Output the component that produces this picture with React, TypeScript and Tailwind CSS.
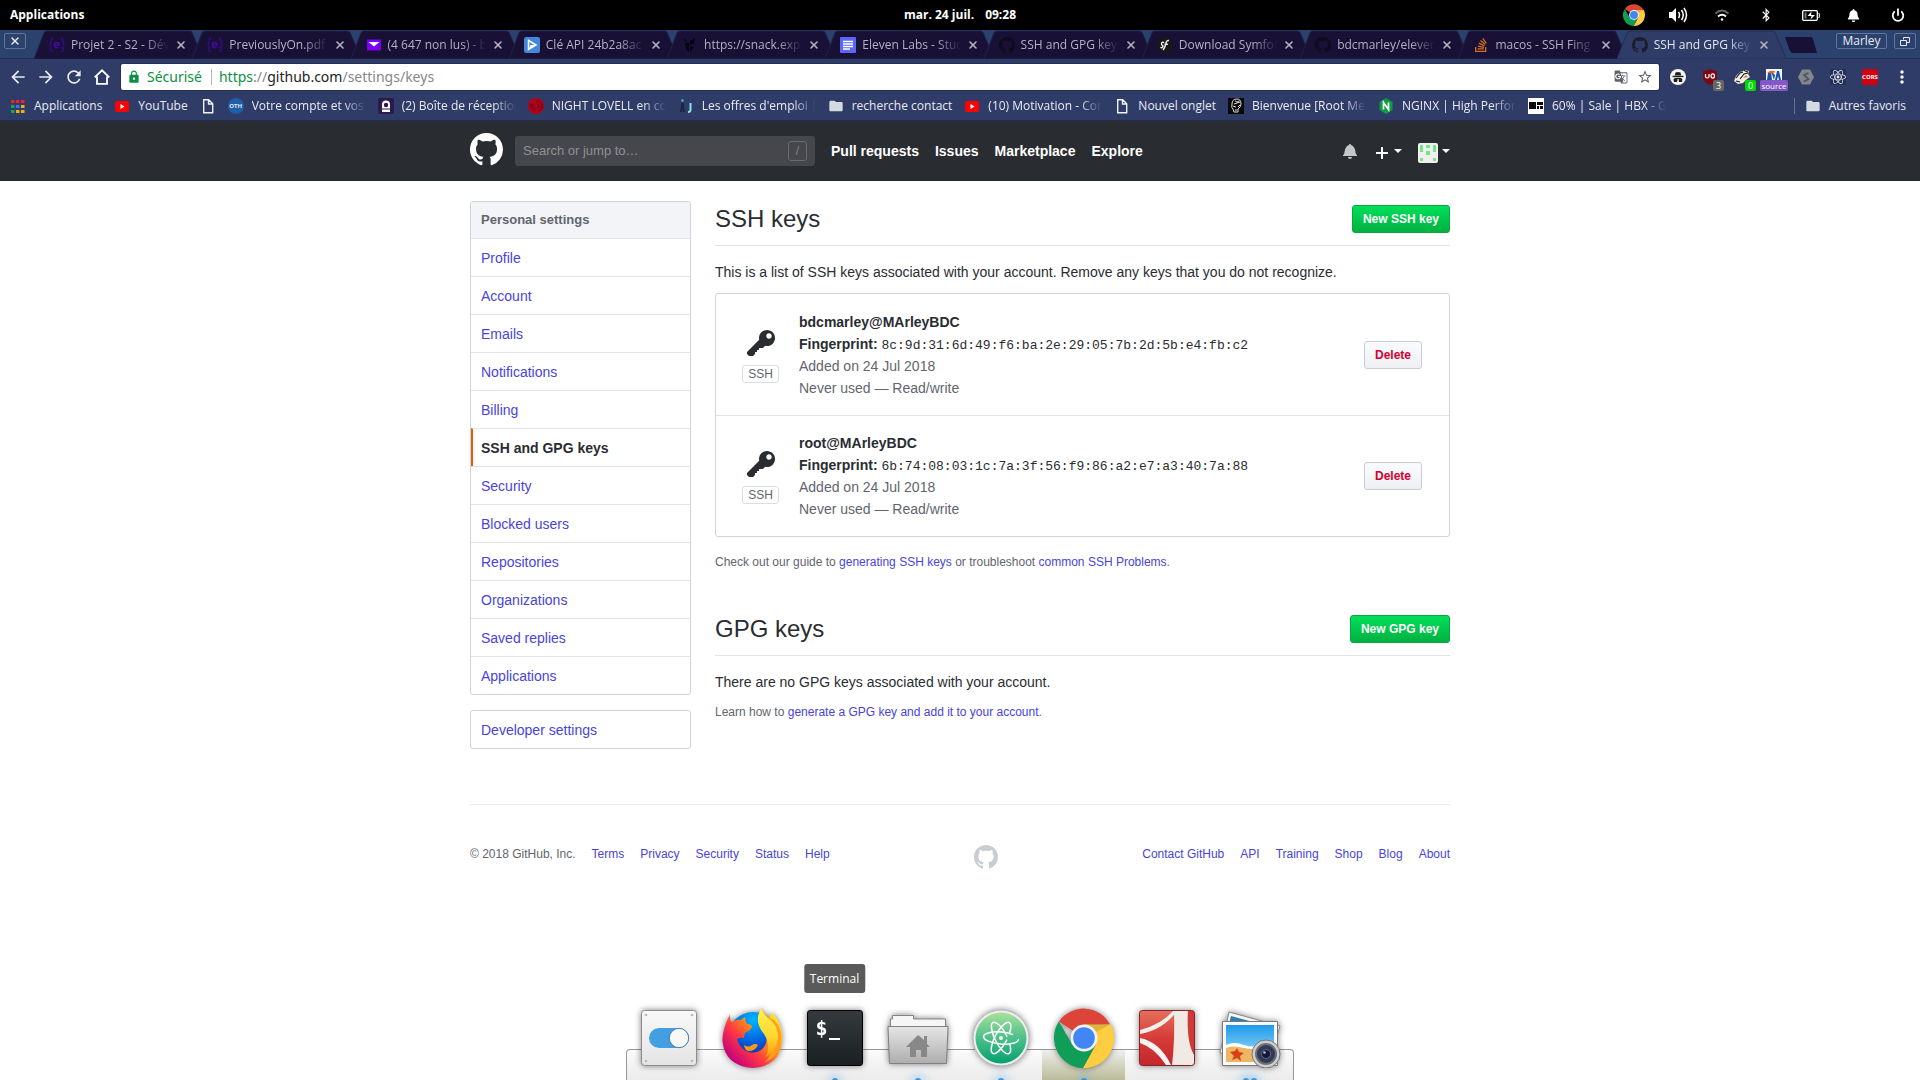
import type { ReactNode } from "react";
import { FaBell, FaBluetoothB, FaReact, FaStackOverflow } from "react-icons/fa";
import { MdArrowBack, MdArrowForward, MdFolder, MdGTranslate, MdLock, MdMoreVert, MdRefresh, MdStarBorder } from "react-icons/md";
import { Power, X } from "lucide-react";

const OCTOCAT =
  "M8 0C3.58 0 0 3.58 0 8c0 3.54 2.29 6.53 5.47 7.59.4.07.55-.17.55-.38 0-.19-.01-.82-.01-1.49-2.01.37-2.53-.49-2.69-.94-.09-.23-.48-.94-.82-1.13-.28-.15-.68-.52-.01-.53.63-.01 1.08.58 1.23.82.72 1.21 1.87.87 2.33.66.07-.52.28-.87.51-1.07-1.78-.2-3.64-.89-3.64-3.95 0-.87.31-1.59.82-2.15-.08-.2-.36-1.02.08-2.12 0 0 .67-.21 2.2.82.64-.18 1.32-.27 2-.27.68 0 1.36.09 2 .27 1.53-1.04 2.2-.82 2.2-.82.44 1.1.16 1.92.08 2.12.51.56.82 1.27.82 2.15 0 3.07-1.87 3.75-3.65 3.95.29.25.54.73.54 1.48 0 1.07-.01 1.93-.01 2.2 0 .21.15.46.55.38A8.013 8.013 0 0 0 16 8c0-4.42-3.58-8-8-8z";
const KEY =
  "M12.83 2.17C12.08 1.42 11.14 1.03 10 1c-1.13.03-2.08.42-2.83 1.17S6.04 3.86 6.01 5c0 .3.03.59.09.89L0 12v1l1 1h2l1-1v-1h1v-1h1v-1h2l1.09-1.11c.3.08.59.11.91.11 1.14-.03 2.08-.42 2.83-1.17S13.97 6.14 14 5c-.03-1.14-.42-2.08-1.17-2.83zM11 5.38c-.77 0-1.38-.61-1.38-1.38 0-.77.61-1.38 1.38-1.38.77 0 1.38.61 1.38 1.38 0 .77-.61 1.38-1.38 1.38z";
const BELL =
  "M13.99 11.991v1H0v-1l.73-.58c.769-.769.809-2.547 1.189-4.416.77-3.767 4.077-4.996 4.077-4.996 0-.55.45-1 .999-1 .55 0 1 .45 1 1 0 0 3.387 1.229 4.156 4.996.38 1.879.42 3.657 1.19 4.417l.659.58h-.01zM6.995 15.99c1.11 0 1.999-.89 1.999-1.999H4.996c0 1.11.89 1.999 1.999 1.999z";

function GitHubMark({ className }: { className?: string }) {
  return (
    <svg viewBox="0 0 16 16" className={className} fill="currentColor" aria-hidden="true">
      <path fillRule="evenodd" d={OCTOCAT} />
    </svg>
  );
}

function ChromeLogo({ className }: { className?: string }) {
  return (
    <svg viewBox="0 0 60 60" className={className} aria-hidden="true">
      <path d="M30 30 L4.9 13.5 A30 30 0 0 1 56 16.5 L30 16.5 Z" fill="#db4437" />
      <path d="M30 16.5 H56.8 A30 30 0 0 1 29 60 L41.7 36.7 Z" fill="#ffcd40" />
      <path d="M4.9 13.5 L18.3 36.7 L30 43.5 L41.7 36.7 L29 60 A30 30 0 0 1 4.9 13.5 Z" fill="#0f9d58" />
      <path d="M30 16.5 H56.5 L42 24 Z" fill="#000" opacity=".12" />
      <circle cx="30" cy="30" r="13.5" fill="#f1f1f1" />
      <circle cx="30" cy="30" r="10.8" fill="#4285f4" />
    </svg>
  );
}

const Braces = () => (
  <svg viewBox="0 0 16 16" className="size-4" fill="none" stroke="#3c0c9c" aria-hidden="true">
    <path d="M4 1.500H2.800Q2 1.500 2 3V6L.7 8 2 10v3q0 1.500.8 1.500H4M12 1.500h1.200Q14 1.500 14 3V6l1.300 2L14 10v3q0 1.500-.8 1.500H12" />
    <path d="M5.500 8H10q0-2.500-2.300-2.500T5.500 8q0 2.500 2.300 2.500H9.500M11.500 10.500h1" strokeWidth="1.700" />
  </svg>
);
const MailIcon = () => (
  <svg viewBox="0 0 16 16" className="size-4" aria-hidden="true">
    <path d="M1 2.500h14v11H1z" fill="#7a00f0" />
    <path d="M2.500 5h11L8 9.500z" fill="#fff" />
  </svg>
);
const PlayIcon = () => (
  <svg viewBox="0 0 16 16" className="size-4" aria-hidden="true">
    <rect width="16" height="16" rx="2" fill="#4486d8" />
    <path d="M4.500 3.500 12 8l-7.500 4.500z" fill="none" stroke="#fff" strokeWidth="1.500" />
    <path d="m6.500 8 5.500 0-7.500 4.500z" fill="#fff" />
  </svg>
);
const SnackIcon = () => (
  <svg viewBox="0 0 16 16" className="size-4" fill="#07040f" aria-hidden="true">
    <path d="M3 6l4-1v10l-3-3zM8 4l5-3-1 6-4 1zM8 9l4 1-4 5zM2 2l3 1-2 2z" />
  </svg>
);
const DocsIcon = () => (
  <svg viewBox="0 0 16 16" className="size-4" aria-hidden="true">
    <rect width="16" height="16" rx="1" fill="#5c66fa" />
    <path d="M3 4.500h10M3 7h10M3 9.500h10M3 12h7" stroke="#fff" strokeWidth="1.300" />
  </svg>
);
const SymfonyIcon = () => (
  <svg viewBox="0 0 16 16" className="size-4" aria-hidden="true">
    <circle cx="8" cy="8" r="8" fill="#1a171b" />
    <path d="M12 3.500Q9.500 3 8.700 7T6 13M7.500 7.300h3.400M7.200 5.600Q4.500 4.600 4.500 6.500T6 9Q5.500 11.500 3.400 10.300" fill="none" stroke="#eee" strokeWidth="1.400" />
  </svg>
);

type Item = { label: string; icon: ReactNode };

const tabs: Item[] = [
  { label: "Projet 2 - S2 - Dével", icon: <Braces /> },
  { label: "PreviouslyOn.pdf", icon: <Braces /> },
  { label: "(4 647 non lus) - bd", icon: <MailIcon /> },
  { label: "Clé API 24b2a8ac", icon: <PlayIcon /> },
  { label: "https://snack.expo", icon: <SnackIcon /> },
  { label: "Eleven Labs - Stud", icon: <DocsIcon /> },
  { label: "SSH and GPG keys", icon: <GitHubMark className="size-4 text-[#0e0b1c]" /> },
  { label: "Download Symfon", icon: <SymfonyIcon /> },
  { label: "bdcmarley/eleven", icon: <GitHubMark className="size-4 text-[#0e0b1c]" /> },
  { label: "macos - SSH Fing", icon: <FaStackOverflow className="size-4 text-[#d8701c]" /> },
  { label: "SSH and GPG keys", icon: <GitHubMark className="size-4 text-[#1b1f2c]" /> },
];

function Tab({ label, icon, active }: Item & { active: boolean }) {
  return (
    <li className={active ? "relative z-10 h-full min-w-0 flex-1" : "relative h-full min-w-0 flex-1"}>
      <svg viewBox="0 0 169 29" preserveAspectRatio="none" className="absolute inset-y-0 left-0 h-full w-[calc(100%+11px)]" aria-hidden="true">
        <path d="M0 29 10 3Q11 1 13 1H155Q157 1 158 3L169 29Z" fill={active ? "#2f3c68" : "#191036"} stroke={active ? "#253057" : "#1e2148"} />
      </svg>
      <div className="relative flex h-full items-center pl-[15px]">
        <span className="size-4 shrink-0">{icon}</span>
        <button
          type="button"
          className={
            active
              ? "ml-[6px] min-w-0 flex-1 overflow-hidden text-left whitespace-nowrap text-[#e4e7ee] [mask-image:linear-gradient(to_right,#000_75%,transparent)]"
              : "ml-[6px] min-w-0 flex-1 overflow-hidden text-left whitespace-nowrap text-[#b4b1bf] [mask-image:linear-gradient(to_right,#000_75%,transparent)]"
          }
        >
          {label}
        </button>
        <button type="button" aria-label={"Fermer " + label} className="mr-[5px] ml-[6px] text-[#b4b1bf]">
          <X className="size-3" strokeWidth={3.2} />
        </button>
      </div>
    </li>
  );
}

const YouTube = () => (
  <svg viewBox="0 0 16 16" className="size-4" aria-hidden="true">
    <rect x="1" y="3" width="14" height="11" rx="2" fill="#f00" />
    <path d="m6.500 6 4 2.500-4 2.500z" fill="#fff" />
  </svg>
);
const Page = () => (
  <svg viewBox="0 0 16 16" className="size-4" fill="none" stroke="#f0f2f6" strokeWidth="1.400" aria-hidden="true">
    <path d="M3.700 1.700h5l4 4v9.100h-9zM8.500 2v4h4" />
  </svg>
);
const AppsGrid = () => (
  <svg viewBox="0 0 16 16" className="size-4" aria-hidden="true">
    <path d="M1 2h3.500v3H1zM6 2h3.500v3H6zM11 2h3.500v3H11z" fill="#f21f2c" />
    <path d="M1 7h3.500v3H1zM1 12h3.500v3H1z" fill="#14a651" />
    <path d="M6 7h3.500v3H6z" fill="#3d74ec" />
    <path d="M11 7h3.500v3H11zM6 12h3.500v3H6zM11 12h3.500v3H11z" fill="#f7ac0c" />
  </svg>
);

const bookmarks: Item[] = [
  { label: "Applications", icon: <AppsGrid /> },
  { label: "YouTube", icon: <YouTube /> },
  { label: "", icon: <Page /> },
  {
    label: "Votre compte et vos s",
    icon: <span className="flex size-4 items-center justify-center rounded-full bg-[#1f5fa8] text-[6px] font-bold">OTH</span>,
  },
  {
    label: "(2) Boîte de réception",
    icon: (
      <svg viewBox="0 0 16 16" className="size-4" aria-hidden="true">
        <rect width="16" height="16" rx="2" fill="#2c1a4c" />
        <path d="M4 14V6.500a4 4 0 0 1 8 0V14z" fill="#fff" />
        <circle cx="8" cy="7" r="2.200" fill="#2c1a4c" />
        <path d="M4 11h8" stroke="#2c1a4c" />
      </svg>
    ),
  },
  {
    label: "NIGHT LOVELL en con",
    icon: (
      <svg viewBox="0 0 16 16" className="size-4" aria-hidden="true">
        <circle cx="8" cy="8" r="8" fill="#b80012" />
        <path d="M3 5a6 6 0 0 0 4 8M5 5.500a4 4 0 0 0 3 5.500M8 3a5 5 0 1 1 2 10M9 6a2 2 0 1 1 0 4" fill="none" stroke="#4c1030" />
      </svg>
    ),
  },
  {
    label: "Les offres d'emploi |",
    icon: (
      <svg viewBox="0 0 16 16" className="size-4" aria-hidden="true">
        <path d="M3 5h3v4l1 5H5L4.500 11 4 14H2l1-5z" fill="#1a2545" />
        <circle cx="4.500" cy="2.500" r="1.200" fill="#3cc3b8" />
        <path d="M12.500 5v7q0 2-2.500 2" stroke="#8de0e8" strokeWidth="2" fill="none" />
      </svg>
    ),
  },
  { label: "recherche contact", icon: <MdFolder className="size-4 text-[#d5d9e2]" /> },
  { label: "(10) Motivation - Com", icon: <YouTube /> },
  { label: "Nouvel onglet", icon: <Page /> },
  {
    label: "Bienvenue [Root Me :",
    icon: (
      <svg viewBox="0 0 16 16" className="size-4" aria-hidden="true">
        <path d="M0 0h16v16H0z" fill="#0a0a0c" />
        <path d="M4 6q0-5 5-5 4 0 4 5 0 3-3 5v3H6l-1-3q-2-1-1-5M5 8l3 1M10 9l2-2M7 3q2 2 4 0M7 12h2M6 6l6-2" fill="none" stroke="#ddd" />
      </svg>
    ),
  },
  {
    label: "NGINX | High Perform",
    icon: (
      <svg viewBox="0 0 16 16" className="size-4" aria-hidden="true">
        <path d="m8 0 6.500 4v8L8 16l-6.500-4V4z" fill="#0f9c3f" />
        <path d="M5.500 11.500v-7l5 7v-7" fill="none" stroke="#fff" strokeWidth="1.700" />
      </svg>
    ),
  },
  {
    label: "60% | Sale | HBX - Gl",
    icon: (
      <svg viewBox="0 0 16 16" className="size-4" aria-hidden="true">
        <path d="M0 0h16v16H0z" fill="#fff" />
        <path d="M1 4h7v7H1zM9 4h6v3H9zM9 8h2v3H9zM12 8h3v3h-3z" fill="#0a0a0a" />
      </svg>
    ),
  },
];

function Extension({ label, children, badge }: { label: string; children: ReactNode; badge?: ReactNode }) {
  return (
    <button type="button" aria-label={label} className="relative flex h-[28px] w-8 items-center justify-center">
      {children}
      {badge}
    </button>
  );
}

function Extensions() {
  return (
    <div className="flex items-center">
      <Extension label="Incognito">
        <svg viewBox="0 0 16 16" className="size-4" aria-hidden="true">
          <circle cx="8" cy="8" r="8" fill="#f4f4f4" />
          <path d="M5.500 3.500q2.500-1 5 0l.8 3H4.700z" fill="#1c1f24" />
          <path d="M2.500 7.500h11" stroke="#1c1f24" strokeWidth="1.300" />
          <path d="M4 13q-1.500-4 1.500-4T7 13zM9 13q-1-4 1.500-4T12 13z" fill="#1c1f24" />
          <path d="M6 9.500h4" stroke="#1c1f24" strokeWidth="1.300" />
        </svg>
      </Extension>
      <Extension
        label="uBlock"
        badge={<span className="absolute top-[17px] left-[19px] flex h-[11px] w-[11px] items-center justify-center rounded-xs bg-[#666] text-[9px] leading-none text-white">3</span>}
      >
        <svg viewBox="0 0 16 16" className="size-4" aria-hidden="true">
          <path d="M8 0q3 2 7 2v6q0 5-7 8Q1 13 1 8V2q4 0 7-2" fill="#800610" />
          <path d="M3.500 5v2.500q0 1.500 1.700 1.500T7 7.500V5M9 7a1.700 2 0 1 0 3.500 0A1.700 2 0 1 0 9 7" fill="none" stroke="#fff" strokeWidth="1.200" />
        </svg>
      </Extension>
      <Extension
        label="Privacy Badger"
        badge={<span className="absolute top-[17px] left-[19px] flex h-[11px] w-[11px] items-center justify-center rounded-xs bg-[#00d800] text-[9px] leading-none text-white">0</span>}
      >
        <svg viewBox="0 0 16 16" className="size-4" aria-hidden="true">
          <path d="M0 12 2 7l4-4 3-1 2-1 4 1-1 3 2 3-3 2-4 4-5 1z" fill="#f0ece4" />
          <path d="m2 9 4-5 3-1M6 10l4-5 4-1M2 12l4 1M10 1.500l4 1.500" stroke="#1c1a18" fill="none" strokeWidth="1.200" />
          <path d="m9 9 3-3 2 2z" fill="#dd7c3a" />
        </svg>
      </Extension>
      <Extension
        label="Sources"
        badge={<span className="absolute top-[17px] left-[2px] flex h-[11px] w-[28px] items-center justify-center rounded-xs bg-[#8258c8] text-[8px] leading-none text-white">source</span>}
      >
        <svg viewBox="0 0 16 16" className="size-4" aria-hidden="true">
          <path d="M0 0h16v16H0z" fill="#f4f6fb" />
          <path d="M1 11 2 4l3-2 1 9zM5 2l4 4-1 5zM9 11l2-9h2l2 9h-2l-1-4-1 4z" fill="#1552a8" />
          <path d="M1 4q4-4 9-1L5 4.500z" fill="#e8641c" />
        </svg>
      </Extension>
      <Extension label="Stylish">
        <svg viewBox="0 0 16 16" className="size-4" aria-hidden="true">
          <path d="M4 .5h8L16 8l-4 7.500H4L0 8z" fill="#83868b" />
          <path d="M10.500 4 6 6l4.500 4L6 12.500" fill="none" stroke="#4b5365" strokeWidth="1.700" />
        </svg>
      </Extension>
      <Extension label="React">
        <FaReact className="size-4 bg-[#243055] text-[#e8ecf2]" />
      </Extension>
      <Extension label="CORS">
        <span className="flex size-4 items-center justify-center rounded-xs bg-[#d00010] text-[6px] font-bold text-white">CORS</span>
      </Extension>
      <Extension label="Menu">
        <MdMoreVert className="size-5 text-white" />
      </Extension>
    </div>
  );
}

function Desktop() {
  return (
    <header className="grid h-[30px] shrink-0 grid-cols-[1fr_auto_1fr] items-center bg-black px-[10px] text-xs font-bold text-white">
      <button type="button" className="justify-self-start">
        Applications
      </button>
      <time className="flex gap-[11px]">
        <span>mar. 24 juil.</span>
        <span>09:28</span>
      </time>
      <div className="flex items-center justify-self-end pr-[5px]">
        <ChromeLogo className="mr-[23px] size-[22px]" />
        <svg viewBox="0 0 20 16" className="mr-[26px] h-4 w-5" fill="#fff" aria-label="Volume">
          <path d="M1 5h3l4-4v14l-4-4H1z" />
          <path d="M10.500 5q2 3 0 6M13.500 3q3.500 5 0 10M16 1q5 7 0 14" fill="none" stroke="#fff" strokeWidth="1.500" />
        </svg>
        <svg viewBox="0 0 16 14" className="mr-[29px] h-[14px] w-4" fill="none" stroke="#fff" strokeWidth="1.800" aria-label="Wi-Fi">
          <path d="M1.500 5.500q6.500-6 13 0" stroke="#666" />
          <path d="M4 8.500q4-3.500 8 0" />
          <circle cx="8" cy="11.500" r="1.200" fill="#fff" stroke="none" />
        </svg>
        <FaBluetoothB className="mr-[29px] size-[14px]" />
        <svg viewBox="0 0 18 11" className="mr-[27px] h-[11px] w-[18px]" fill="none" stroke="#fff" aria-label="Batterie">
          <rect x=".7" y=".7" width="14.600" height="9.600" rx="1" strokeWidth="1.300" />
          <path d="M16.500 3.500h.8v4h-.8" />
          <path d="M2.500 2.500h2v6h-2z" fill="#777" stroke="none" />
          <path d="M9.500 1.500 5.500 6h4l-1 3.500L13 5H9z" fill="#fff" stroke="none" />
        </svg>
        <FaBell className="mr-[31px] size-[13px]" />
        <Power className="size-[14px]" strokeWidth={3} />
      </div>
    </header>
  );
}

function BrowserChrome() {
  return (
    <div className="flex shrink-0 flex-col bg-[#2f3c68] text-xs text-[#e9ebf1]">
      <div className="flex h-[29px] border-b border-[#253057] bg-[#2b426f]">
        <button type="button" aria-label="Fermer la fenêtre" className="mt-[3px] ml-1 flex h-4 w-[22px] shrink-0 items-center justify-center rounded-xs border border-[#61769a]">
          <X className="size-3" strokeWidth={3} />
        </button>
        <ul className="ml-2 flex h-[29px] min-w-0 flex-1">
          {tabs.map((tab, i) => (
            <Tab key={i} {...tab} active={i === tabs.length - 1} />
          ))}
        </ul>
        <button type="button" aria-label="Nouvel onglet" className="mt-[7px] ml-[10px] h-4 w-8">
          <svg viewBox="0 0 32 16" className="h-4 w-8" aria-hidden="true">
            <path d="M0 0h25q2 0 3 2l4 14H8q-2 0-3-2z" fill="#191036" />
          </svg>
        </button>
        <button type="button" className="mt-[3px] ml-[19px] flex h-4 w-[51px] items-center justify-center rounded-xs border border-[#61769a] text-xs leading-none">
          Marley
        </button>
        <button type="button" aria-label="Restaurer" className="mt-[3px] mr-[4px] ml-[7px] flex h-4 w-[22px] items-center justify-center rounded-xs border border-[#61769a]">
          <svg viewBox="0 0 10 9" className="h-[9px] w-[10px]" fill="none" stroke="#e9ebf1" aria-hidden="true">
            <path d="M3.500 2.500v-2h6v5h-3M.5 3.500h6v5h-6z" />
          </svg>
        </button>
      </div>
      <div className="flex h-8 items-center pt-1">
        <div className="flex items-center gap-2 pl-2">
          <button type="button" aria-label="Précédent"><MdArrowBack className="size-5" /></button>
          <button type="button" aria-label="Suivant"><MdArrowForward className="size-5" /></button>
          <button type="button" aria-label="Actualiser"><MdRefresh className="size-5" /></button>
          <button type="button" aria-label="Accueil" className="flex size-5 items-center justify-center">
            <svg viewBox="0 0 16 16" className="size-4" fill="none" stroke="#fff" strokeWidth="1.800" aria-hidden="true">
              <path d="M.7 8.300 8 1.300l7.300 7M3 7.500v7.300h10V7.500" />
            </svg>
          </button>
        </div>
        <div className="ml-[9px] flex h-[26px] min-w-0 flex-1 items-center rounded-xs bg-white px-[6px] font-['Noto_Sans',sans-serif] text-sm shadow-[0_0_0_1px_#253057]">
          <MdLock className="size-[14px] text-[#0b8f44]" />
          <span className="ml-[6px] text-[#0b8f44]">Sécurisé</span>
          <span className="ml-[9px] h-4 w-px bg-[#b5b5b5]" />
          <div role="textbox" aria-label="Adresse" className="ml-[7px] flex-1 text-[#888]">
            <span className="text-[#0b8f44]">https</span>://<span className="text-[#222]">github.com</span>/settings/keys
          </div>
          <button type="button" aria-label="Traduire" className="mr-[9px] text-[#5f6368]"><MdGTranslate className="size-[14px]" /></button>
          <button type="button" aria-label="Ajouter aux favoris" className="text-[#5f6368]"><MdStarBorder className="size-4" /></button>
        </div>
        <div className="ml-[3px] pr-[2px]">
          <Extensions />
        </div>
      </div>
      <nav aria-label="Favoris" className="flex h-[30px] items-center gap-3 border-b border-[#262b52] pl-[10px]">
        {bookmarks.map((b, i) => (
          <a key={i} href="#" aria-label={b.label || "Page"} className="flex shrink-0 items-center gap-2">
            <span className="size-4 shrink-0">{b.icon}</span>
            {b.label !== "" && (
              <span
                className={
                  b.label.length > 18
                    ? "w-[114px] overflow-hidden whitespace-nowrap [mask-image:linear-gradient(to_right,#000_80%,transparent)]"
                    : "whitespace-nowrap"
                }
              >
                {b.label}
              </span>
            )}
          </a>
        ))}
        <a href="#" className="ml-auto flex shrink-0 items-center gap-2 pr-[14px]">
          <span className="mr-[2px] h-4 w-px bg-[#66708f]" />
          <MdFolder className="size-4 text-[#d5d9e2]" />
          Autres favoris
        </a>
      </nav>
    </div>
  );
}

const Caret = () => (
  <svg viewBox="0 0 8 4" className="h-1 w-2" fill="#fff" aria-hidden="true">
    <path d="M0 0h8L4 4z" />
  </svg>
);

function SiteHeader() {
  return (
    <header className="bg-[#292c31] text-white">
      <div className="mx-auto flex h-[60px] w-full max-w-[980px] items-center">
        <a href="#" aria-label="GitHub" className="mr-3 mb-1">
          <GitHubMark className="size-[33px]" />
        </a>
        <div className="flex h-[30px] w-[300px] items-center rounded-[3px] bg-[#45474c] pr-2">
          <input aria-label="Search GitHub" placeholder="Search or jump to…" className="min-w-0 flex-1 bg-transparent px-2 text-[13px] text-white outline-none placeholder:text-[#8f9194]" />
          <kbd className="flex h-5 w-[19px] items-center justify-center rounded-[3px] border border-[#696b70] font-['Liberation_Sans'] text-xs text-[#808286]">/</kbd>
        </div>
        <nav aria-label="Global" className="ml-4 flex gap-4 text-sm font-bold">
          <a href="#">Pull requests</a>
          <a href="#">Issues</a>
          <a href="#">Marketplace</a>
          <a href="#">Explore</a>
        </nav>
        <div className="ml-auto flex items-center">
          <button type="button" aria-label="Notifications" className="mr-[19px]">
            <svg viewBox="0 0 14 16" className="h-4 w-[14px]" fill="#c5c6c8" aria-hidden="true">
              <path d={BELL} />
            </svg>
          </button>
          <button type="button" aria-label="Create new" className="mr-4 flex items-center gap-[6px]">
            <svg viewBox="0 0 12 12" className="mt-1 size-3" stroke="#fff" strokeWidth="2" aria-hidden="true">
              <path d="M6 0v12M0 6h12" />
            </svg>
            <Caret />
          </button>
          <button type="button" aria-label="Profile" className="flex items-center gap-1">
            <svg viewBox="0 0 20 20" className="mt-1 size-5" aria-hidden="true">
              <rect width="20" height="20" rx="2" fill="#f0f0f0" />
              <path d="M2 2h3v7H2zM15 2h3v7h-3zM8 2h4v3H8zM8 8h4v4H8zM2 15h3v3H2zM15 15h3v3h-3z" fill="#74e584" />
            </svg>
            <Caret />
          </button>
        </div>
      </div>
    </header>
  );
}

const settings = ["Profile", "Account", "Emails", "Notifications", "Billing", "SSH and GPG keys", "Security", "Blocked users", "Repositories", "Organizations", "Saved replies", "Applications"];

function Sidebar() {
  return (
    <aside className="w-[221px] shrink-0">
      <nav aria-label="Personal settings" className="overflow-hidden rounded-[3px] border border-[#d0d3da]">
        <h3 className="h-9 bg-[#f2f4f8] px-[10px] text-[13px] leading-9 font-bold text-[#61656d]">Personal settings</h3>
        {settings.map((item) => (
          <a
            key={item}
            href="#"
            aria-current={item === "SSH and GPG keys" ? "page" : undefined}
            className="flex h-[38px] items-center border-t border-[#e0e3e8] px-[10px] text-[#4744dc] aria-[current=page]:border-l-2 aria-[current=page]:border-l-[#e65c00] aria-[current=page]:pl-2 aria-[current=page]:font-bold aria-[current=page]:text-[#292c31]"
          >
            {item}
          </a>
        ))}
      </nav>
      <a href="#" className="mt-[15px] flex h-[39px] items-center rounded-[3px] border border-[#d0d3da] px-[10px] text-[#4744dc]">
        Developer settings
      </a>
    </aside>
  );
}

const keys = [
  { name: "bdcmarley@MArleyBDC", print: "8c:9d:31:6d:49:f6:ba:2e:29:05:7b:2d:5b:e4:fb:c2" },
  { name: "root@MArleyBDC", print: "6b:74:08:03:1c:7a:3f:56:f9:86:a2:e7:a3:40:7a:88" },
];

function SectionTitle({ title, action }: { title: string; action: string }) {
  return (
    <div className="flex items-start justify-between border-b border-[#e0e2e6] pb-[8px]">
      <h2 className="text-2xl leading-9 font-normal">{title}</h2>
      <button type="button" className="mt-1 h-7 rounded-[3px] border border-[#0aa542] bg-linear-to-b from-[#00e05a] to-[#00b140] px-[10px] text-xs font-bold text-white">
        {action}
      </button>
    </div>
  );
}

function KeysPage() {
  return (
    <main className="min-w-0 flex-1 text-[#292c31]">
      <SectionTitle title="SSH keys" action="New SSH key" />
      <p className="mt-4 leading-[21px]">This is a list of SSH keys associated with your account. Remove any keys that you do not recognize.</p>
      <ul className="mt-[10px] rounded-[3px] border border-[#d0d3da] pt-px">
        {keys.map((k) => (
          <li key={k.name} className="flex items-center border-t border-[#e0e3e8] py-4 pr-[27px] pl-[26px] first:border-t-0">
            <div className="flex w-[37px] flex-col items-center gap-[5px]">
              <svg viewBox="0 0 14 16" className="h-8 w-7" fill="#292c31" aria-hidden="true">
                <path fillRule="evenodd" d={KEY} />
              </svg>
              <span className="w-full rounded-[3px] border border-[#dcdde0] text-center text-xs leading-4 text-[#61656d]">SSH</span>
            </div>
            <div className="ml-5 flex-1 leading-[22px] text-[#61656d]">
              <strong className="block text-[#292c31]">{k.name}</strong>
              <p className="text-[#292c31]">
                <strong>Fingerprint:</strong> <code className="font-['Liberation_Mono',monospace] text-[13px] leading-none">{k.print}</code>
              </p>
              <p>Added on 24 Jul 2018</p>
              <p>Never used — Read/write</p>
            </div>
            <button type="button" className="h-7 rounded-[3px] border border-[#c9ccd1] bg-linear-to-b from-[#fafbfd] to-[#eef0f4] px-[10px] text-xs font-bold text-[#d4002f]">
              Delete
            </button>
          </li>
        ))}
      </ul>
      <p className="mt-4 text-xs leading-[18px] text-[#61656d]">
        Check out our guide to <a href="#" className="text-[#4744dc]">generating SSH keys</a> or troubleshoot <a href="#" className="text-[#4744dc]">common SSH Problems</a>.
      </p>
      <div className="mt-10">
        <SectionTitle title="GPG keys" action="New GPG key" />
      </div>
      <p className="mt-4 leading-[21px]">There are no GPG keys associated with your account.</p>
      <p className="mt-[10px] text-xs leading-[18px] text-[#61656d]">
        Learn how to <a href="#" className="text-[#4744dc]">generate a GPG key and add it to your account</a>.
      </p>
    </main>
  );
}

const Links = ({ items }: { items: string[] }) => (
  <>
    {items.map((item) => (
      <a key={item} href="#" className="text-[#4744dc]">{item}</a>
    ))}
  </>
);

function SiteFooter() {
  return (
    <footer className="mt-[55px] flex items-start justify-between border-t border-[#e9ebef] pt-10 text-xs leading-[18px] text-[#61656d]">
      <div className="flex gap-4">
        <span>© 2018 GitHub, Inc.</span>
        <Links items={["Terms", "Privacy", "Security", "Status", "Help"]} />
      </div>
      <GitHubMark className="size-6 text-[#c8ccd3]" />
      <div className="flex gap-4">
        <Links items={["Contact GitHub", "API", "Training", "Shop", "Blog", "About"]} />
      </div>
    </footer>
  );
}

const Switches = () => (
  <svg viewBox="0 0 60 60" className="size-[60px]" aria-hidden="true">
    <defs>
      <linearGradient id="plate" x2="0" y2="1"><stop stopColor="#f9f9f9" /><stop offset="1" stopColor="#e4e4e4" /></linearGradient>
    </defs>
    <rect x="2.500" y="2.500" width="55" height="55" rx="3" fill="url(#plate)" stroke="#8c8c8c" />
    <g fill="#bbb"><circle cx="7" cy="7" r="1.300" /><circle cx="53" cy="7" r="1.300" /><circle cx="7" cy="53" r="1.300" /><circle cx="53" cy="53" r="1.300" /></g>
    <rect x="10" y="20" width="40" height="20" rx="10" fill="#449fe2" />
    <circle cx="40" cy="30" r="9.700" fill="#f8f8f8" stroke="#4d7ea8" />
  </svg>
);

const Firefox = () => (
  <svg viewBox="0 0 60 60" className="size-[60px]" aria-hidden="true">
    <defs>
      <linearGradient id="fox" x1=".9" y1=".1" x2=".1" y2=".8"><stop stopColor="#ffe226" /><stop offset=".35" stopColor="#ff980e" /><stop offset=".65" stopColor="#ff3647" /><stop offset="1" stopColor="#c4007e" /></linearGradient>
      <radialGradient id="globe" cx=".5" cy=".15" r=".9"><stop stopColor="#00b5ff" /><stop offset=".5" stopColor="#0060df" /><stop offset="1" stopColor="#2c1470" /></radialGradient>
      <linearGradient id="flame" x2="0" y2="1"><stop stopColor="#fff44f" /><stop offset=".6" stopColor="#ffd52e" /><stop offset="1" stopColor="#ff980e" /></linearGradient>
    </defs>
    <circle cx="31" cy="29" r="25" fill="url(#globe)" />
    <path d="M8 6q-1 5 2 8 4-3 9-2 2-2 4-3 0 4 2 7 5 0 5 3-1 3-7 6-1 2-1 5-4-1-7 1 2 8 9 12 8 4 15-1 8-6 5-18 3-12 5-19 5 3 7 8 5 9 4 20-2 25-29 27Q3 58 .5 33 0 22 8 6z" fill="url(#fox)" />
    <path d="M22 37q5 3 8 0 3-2 6 0-3 6-9 6-4 0-5-6" fill="#ff9a16" />
    <path d="M40 0q-2 8 4 14 7 8 7 20 0 12-8 20 12-4 15-16 4-16-6-26Q42 8 40 0" fill="#ff9d1a" />
    <path d="M40 0q-5 6-4 14 1 6 6 12 7 10 2 23 10-6 12-18Q57 17 46 10q-5-4-6-10" fill="url(#flame)" />
  </svg>
);

const TerminalIcon = () => (
  <div className="flex size-14 items-start rounded-[3px] border border-black bg-linear-to-b from-[#343a3e] to-[#1b2022] px-2 pt-px font-['DejaVu_Sans_Mono'] text-xl leading-8 font-bold text-white">
    <span>$</span>
    <span className="mt-[26px] ml-px h-[2px] w-[11px] bg-white" />
  </div>
);

const HomeFolder = () => (
  <svg viewBox="0 0 62 60" className="h-[60px] w-[62px]" aria-hidden="true">
    <defs>
      <linearGradient id="folder" x2="0" y2="1"><stop stopColor="#e6e6e6" /><stop offset="1" stopColor="#adadad" /></linearGradient>
    </defs>
    <path d="M3.500 20V11h2V7.500h21V11h32v9" fill="#f6f6f6" stroke="#858585" />
    <path d="M1 18.500h60L59.500 55.500h-57z" fill="url(#folder)" stroke="#808080" />
    <path d="M31 27 19 39h4v10h6v-7h5v7h6V39h3l-3-3v-8h-3v4z" fill="#888" />
  </svg>
);

const AtomIcon = () => (
  <svg viewBox="0 0 60 60" className="size-[60px]" aria-hidden="true">
    <defs>
      <linearGradient id="atom" x2="0" y2="1"><stop stopColor="#a8e09a" /><stop offset=".5" stopColor="#4cc08a" /><stop offset="1" stopColor="#06a070" /></linearGradient>
    </defs>
    <circle cx="30" cy="30" r="28" fill="#eee" stroke="#bbb" />
    <circle cx="30" cy="30" r="25.500" fill="url(#atom)" />
    <g fill="none" stroke="#fff" strokeWidth="1.500">
      <ellipse cx="30" cy="30" rx="17.500" ry="6" strokeDasharray="70 7" transform="rotate(5 30 30)" />
      <ellipse cx="30" cy="30" rx="17.500" ry="6" strokeDasharray="60 7" transform="rotate(63 30 30)" />
      <ellipse cx="30" cy="30" rx="17.500" ry="6" strokeDasharray="50 7" transform="rotate(118 30 30)" />
    </g>
    <circle cx="30" cy="30" r="2" fill="#fff" />
  </svg>
);

const ReaderIcon = () => (
  <svg viewBox="0 0 60 60" className="size-[60px]" aria-hidden="true">
    <defs>
      <linearGradient id="reader" x2="0" y2="1"><stop stopColor="#e5705c" /><stop offset=".5" stopColor="#d63c38" /><stop offset="1" stopColor="#c4262c" /></linearGradient>
    </defs>
    <rect x="2.500" y="2.500" width="55" height="55" rx="3" fill="url(#reader)" />
    <path d="M3 22Q25 16 36 3h4Q26 22 3 26z" fill="#f4efe9" />
    <path d="M39 3h12q-2 30 6 44v10H35q3-25 2-54z" fill="#f0e9e4" />
    <path d="M51 3q-1 27 6 42V3z" fill="#cf3a38" />
    <path d="M3 30q20 4 31 27h-5Q18 40 3 35z" fill="#fbf3f1" />
    <rect x="2.500" y="2.500" width="55" height="55" rx="3" fill="none" stroke="#8d2024" />
  </svg>
);

const PhotosIcon = () => (
  <svg viewBox="0 0 64 60" className="h-[60px] w-16" aria-hidden="true">
    <defs>
      <linearGradient id="sky" x2="0" y2="1"><stop stopColor="#1e9aea" /><stop offset="1" stopColor="#a8e4fa" /></linearGradient>
    </defs>
    <path d="m11 4 51 14-9 30L2 45z" fill="#f4f4f4" stroke="#888" />
    <path d="m13 8 44 12-4 14-42-18z" fill="#2b7fae" />
    <path d="M4.500 13.500h55v44h-55z" fill="#fafafa" stroke="#777" />
    <path d="M8 17h48v37H8z" fill="url(#sky)" />
    <path d="M8 38q8-4 18 0t30-2v18H8z" fill="#eeb661" />
    <path d="M8 37q8-4 18 0t30-2v3q-18 5-30 2T8 40z" fill="#fff" />
    <path d="m19 40 2 4 5 1-4 3 1 5-4-3-5 2 2-4-4-4 5-1z" fill="#d84018" />
    <circle cx="48" cy="46" r="14" fill="#cfcfcf" stroke="#777" />
    <circle cx="48" cy="46" r="10" fill="#343a50" stroke="#6c6f7c" strokeWidth="2" />
    <circle cx="48" cy="46" r="4.500" fill="#16182c" stroke="#5668a0" />
    <circle cx="46.500" cy="44.500" r="1.300" fill="#b0b8e8" />
  </svg>
);

const dock: { label: string; icon: ReactNode; dots: number }[] = [
  { label: "Paramètres", icon: <Switches />, dots: 0 },
  { label: "Firefox", icon: <Firefox />, dots: 0 },
  { label: "Terminal", icon: <TerminalIcon />, dots: 1 },
  { label: "Fichiers", icon: <HomeFolder />, dots: 1 },
  { label: "Atom", icon: <AtomIcon />, dots: 1 },
  { label: "Chrome", icon: <ChromeLogo className="size-[60px]" />, dots: 1 },
  { label: "Lecteur PDF", icon: <ReaderIcon />, dots: 0 },
  { label: "Photos", icon: <PhotosIcon />, dots: 2 },
];

function Dock() {
  return (
    <nav aria-label="Dock" className="fixed bottom-0 left-1/2 z-20 h-[31px] -translate-x-1/2 rounded-t-[4px] border border-b-0 border-[#979797] bg-linear-to-b from-[#fbfbfb] to-[#ebebeb]">
      <ul className="flex h-full pr-[2px]">
        {dock.map((app) => (
          <li key={app.label} className={app.label === "Chrome" ? "relative h-full w-[83px] bg-linear-to-b from-[#efefec] to-[#babb98]" : "relative h-full w-[83px]"}>
            <button type="button" aria-label={app.label} className="absolute bottom-3 left-1/2 flex h-[60px] -translate-x-1/2 items-center drop-shadow-[0_0_3px_rgba(0,0,0,0.5)]">
              {app.icon}
            </button>
            {app.dots > 0 && (
              <span className="absolute -bottom-1 left-1/2 flex -translate-x-1/2 gap-[2px]">
                {Array.from({ length: app.dots }, (_, i) => (
                  <span key={i} className="size-[6px] rounded-full border-2 border-[#3f95d6] bg-[#8cc8f2] shadow-[0_0_8px_4px_rgba(90,175,235,0.35)]" />
                ))}
              </span>
            )}
            {app.label === "Terminal" && (
              <span role="tooltip" className="absolute bottom-[87px] left-1/2 flex h-[29px] -translate-x-1/2 items-center rounded-[3px] bg-[#5a5a5a] px-[6px] text-xs text-white">
                Terminal
              </span>
            )}
          </li>
        ))}
      </ul>
    </nav>
  );
}

export default function App() {
  return (
    <div className="flex min-h-screen flex-col overflow-hidden bg-white font-['Open_Sans','Noto_Sans',sans-serif]">
      <Desktop />
      <BrowserChrome />
      <div className="font-['Liberation_Sans',Arial,sans-serif] text-sm">
        <SiteHeader />
        <div className="mx-auto w-full max-w-[980px]">
          <div className="mt-5 flex gap-6">
            <Sidebar />
            <KeysPage />
          </div>
          <SiteFooter />
        </div>
      </div>
      <Dock />
    </div>
  );
}
